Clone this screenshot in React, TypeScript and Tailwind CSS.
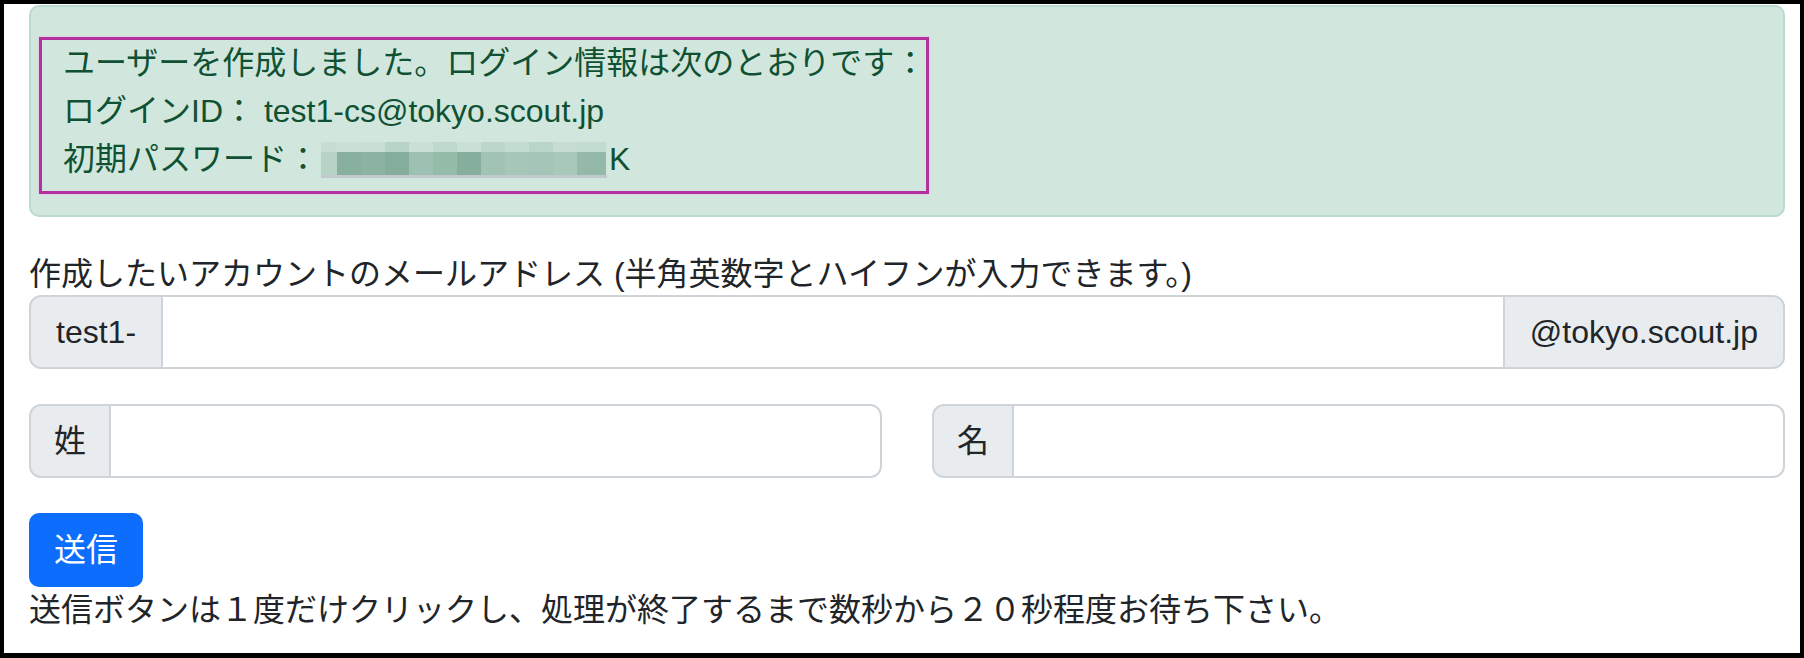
import React from "react";

const font = { fontFamily: '"Liberation Sans", "Noto Sans CJK JP", sans-serif' };

function Mosaic() {
  const cols = [322, 338, 362, 386, 410, 434, 458, 482, 506, 530, 554, 578, 607];
  const top = ["#c6ded3", "#c9e0d6", "#c8dfd5", "#b8d3c7", "#c9e0d6", "#bfd9cd", "#c9e0d6", "#bcd6ca", "#c3dcd1", "#b9d4c8", "#c5ddd3", "#c3dcd1"];
  const bottom = ["#b6d3c6", "#88b09f", "#8cb2a1", "#84ad9b", "#9cc0b1", "#95bba9", "#86ae9c", "#a0c3b4", "#a6c6b8", "#a4c5b7", "#a8c8ba", "#94b9a8"];
  return (
    <svg width={286} height={36} viewBox="0 0 286 36" className="block">
      {cols.slice(0, -1).map((x, i) => {
        const w = cols[i + 1] - x;
        return (
          <g key={i}>
            <rect x={x - 322} y={0} width={w} height={10} fill={top[i]} />
            <rect x={x - 322} y={10} width={w} height={23} fill={bottom[i]} />
          </g>
        );
      })}
      <rect x={0} y={33} width={286} height={3} fill="#c2c9cd" />
    </svg>
  );
}

export default function App() {
  return (
    <div
      style={font}
      className="w-[1804px] h-[658px] bg-white border-black border-t-4 border-l-4 border-r-4 border-b-[5px] pt-[1px] pl-[25px] pr-[15px] text-[32px] leading-[48px] text-[#212529]"
    >
      <div className="relative bg-[#d1e7dd] border-2 border-[#badbcc] rounded-[10px] px-[32px] pt-[32px] pb-[32px] text-[#0f5132] mb-[33px]">
        <div className="h-[48px]">ユーザーを作成しました。ログイン情報は次のとおりです：</div>
        <div className="h-[48px]">ログインID： test1-cs@tokyo.scout.jp</div>
        <div className="h-[48px] flex items-center">
          <span>初期パスワード：</span>
          <span className="ml-[2px] mt-[2px]">
            <Mosaic />
          </span>
          <span className="ml-[2px]">K</span>
        </div>
        <div className="absolute left-[8px] top-[30px] w-[890px] h-[157px] border-[3px] border-[#b3309f] shadow-[0_0_2px_#f3a6e6]" />
      </div>

      <div className="h-[45px]">作成したいアカウントのメールアドレス (半角英数字とハイフンが入力できます。)</div>

      <div className="flex h-[74px] mb-[35px]">
        <div className="flex items-center px-[25px] bg-[#e9ecef] border-2 border-[#ced4da] rounded-l-[12px]">test1-</div>
        <input
          type="text"
          style={font}
          className="flex-1 min-w-0 border-2 border-l-0 border-r-0 border-[#ced4da] bg-white px-[24px] text-[32px] outline-none"
        />
        <div className="flex items-center px-[25px] bg-[#e9ecef] border-2 border-[#ced4da] rounded-r-[12px]">@tokyo.scout.jp</div>
      </div>

      <div className="grid grid-cols-2 gap-x-[50px] mb-[35px]">
        <div className="flex h-[74px]">
          <div className="flex items-center px-[23px] bg-[#e9ecef] border-2 border-[#ced4da] rounded-l-[12px]">姓</div>
          <input
            type="text"
            style={font}
            className="flex-1 min-w-0 border-2 border-l-0 border-[#ced4da] rounded-r-[12px] bg-white px-[24px] text-[32px] outline-none"
          />
        </div>
        <div className="flex h-[74px]">
          <div className="flex items-center px-[23px] bg-[#e9ecef] border-2 border-[#ced4da] rounded-l-[12px]">名</div>
          <input
            type="text"
            style={font}
            className="flex-1 min-w-0 border-2 border-l-0 border-[#ced4da] rounded-r-[12px] bg-white px-[24px] text-[32px] outline-none"
          />
        </div>
      </div>

      <button
        type="button"
        style={font}
        className="h-[74px] px-[23px] bg-[#0d6efd] border-2 border-[#0d6efd] rounded-[10px] text-white text-[32px] leading-[48px]"
      >
        送信
      </button>
      <div className="h-[48px] -mt-[1px]">送信ボタンは１度だけクリックし、処理が終了するまで数秒から２０秒程度お待ち下さい。</div>
    </div>
  );
}
